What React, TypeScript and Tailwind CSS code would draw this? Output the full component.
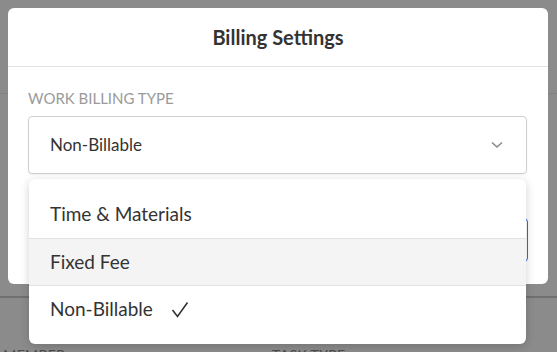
import React from "react";

const options = [
  { label: "Time & Materials", hover: false, selected: false },
  { label: "Fixed Fee", hover: true, selected: false },
  { label: "Non-Billable", hover: false, selected: true },
];

export default function App() {
  return (
    <div
      className="relative h-[352px] w-[557px] overflow-hidden bg-[#8b8b8b]"
      style={{ fontFamily: "Lato, 'Open Sans', sans-serif" }}
    >
      {/* page behind the overlay */}
      <div className="pt-[93px]">
        <div className="h-px bg-[#828282]" />
        <div className="mt-[202px] h-[2px] bg-[#707070]" />
        <div className="mt-[50px] flex text-[14px] leading-none tracking-wide text-[#4a4a4a]">
          <span className="ml-[-14px] w-[286px]">M MEMBER</span>
          <span>TASK TYPE</span>
        </div>
      </div>

      {/* modal */}
      <div className="absolute left-[8px] top-[8px] h-[276px] w-[540px] rounded-md bg-white">
        <div className="flex h-[59px] items-center justify-center border-b border-[#e3e3e3]">
          <h1 className="text-[20px] font-bold text-[#333]">Billing Settings</h1>
        </div>
        <div className="px-5 pt-[24px]">
          <p className="text-[15px] uppercase leading-none text-[#9a9a9a]">Work Billing Type</p>
          <div className="relative mt-[10px]">
            <div className="flex h-[58px] w-[499px] items-center justify-between rounded border border-[#cfcfcf] bg-white pl-[21px] pr-[23px] shadow-[0_1px_2px_rgba(0,0,0,0.06)]">
              <span className="text-[17px] text-[#333]">Non-Billable</span>
              <svg width="12" height="8" viewBox="0 0 12 8" fill="none">
                <path d="M1 1.5 L6 6 L11 1.5" stroke="#8a8a8a" strokeWidth="1.6" />
              </svg>
            </div>

            {/* button underneath the open menu */}
            <div className="ml-auto mt-[44px] h-[44px] w-[120px] rounded border border-[#2f6fd6]" />

            {/* dropdown menu */}
            <div className="absolute left-px top-[63px] w-[497px] rounded-md bg-white py-[12px] shadow-[0_2px_10px_rgba(0,0,0,0.18)]">
              {options.map((o, i) => (
                <div
                  key={o.label}
                  className={`flex h-[47px] items-center gap-[18px] pl-[21px] text-[19px] text-[#333] ${
                    i > 0 ? "border-t border-[#e2e2e2]" : ""
                  } ${o.hover ? "bg-[#f4f4f4]" : ""}`}
                >
                  <span>{o.label}</span>
                  {o.selected && (
                    <svg width="18" height="17" viewBox="0 0 18 17" fill="none">
                      <path d="M1.5 9 L6.5 15.5 L16.5 1.5" stroke="#333" strokeWidth="1.6" />
                    </svg>
                  )}
                </div>
              ))}
            </div>
          </div>
        </div>
      </div>
    </div>
  );
}
